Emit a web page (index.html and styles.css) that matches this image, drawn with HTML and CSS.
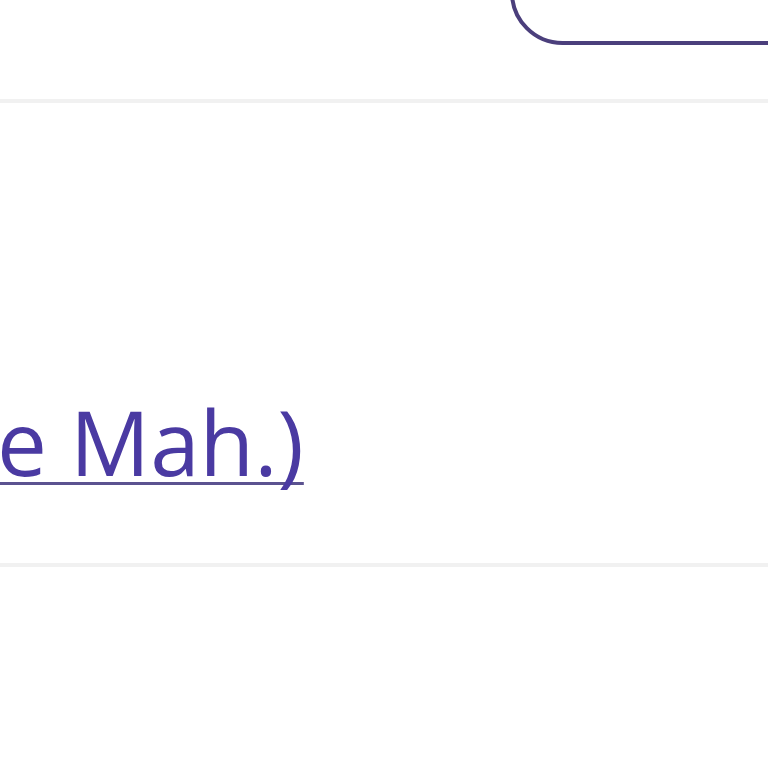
FILE: index.html
```html
<!DOCTYPE html>
<html lang="fr">
<head>
  <meta charset="UTF-8" />
  <meta name="viewport" content="width=device-width, initial-scale=1.0"/>
  <title>Itinéraire</title>
  <link rel="stylesheet" href="styles.css">
</head>
<body>
  <div class="topbar">
    <button class="btn-outline" type="button"></button>
  </div>

  <div class="row">
    <a class="place-link" href="#">e Mah.)</a>
  </div>

  <div class="row-empty"></div>
</body>
</html>
```

FILE: styles.css
```css
:root {
  --link-color: #4a3aa2;
  --border-color: #4b3f7c;
  --line-color: #f1f1f1;
  --font-family: 'Open Sans', 'Noto Sans', sans-serif;
}

body {
  margin: 0;
  padding: 0;
  overflow: hidden;
  font-family: var(--font-family);
  background-color: #ffffff;
}

.topbar {
  display: flex;
  justify-content: flex-end;
  margin-top: -60px;
  padding-bottom: 54px;
  border-bottom: 4px solid var(--line-color);
}

.btn-outline {
  width: 340px;
  height: 105px;
  margin-right: -82px;
  background: transparent;
  border: 4px solid var(--border-color);
  border-radius: 60px;
}

.row {
  padding: 278px 0 61px;
  border-bottom: 4px solid var(--line-color);
  overflow: hidden;
}

.place-link {
  display: inline-block;
  margin-left: -3px;
  font-size: 89px;
  color: var(--link-color);
  text-decoration: underline;
  text-decoration-color: #5b5290;
  text-decoration-thickness: 3px;
  text-decoration-skip-ink: none;
  text-underline-offset: 6px;
}

.row-empty {
  height: 200px;
}
```
